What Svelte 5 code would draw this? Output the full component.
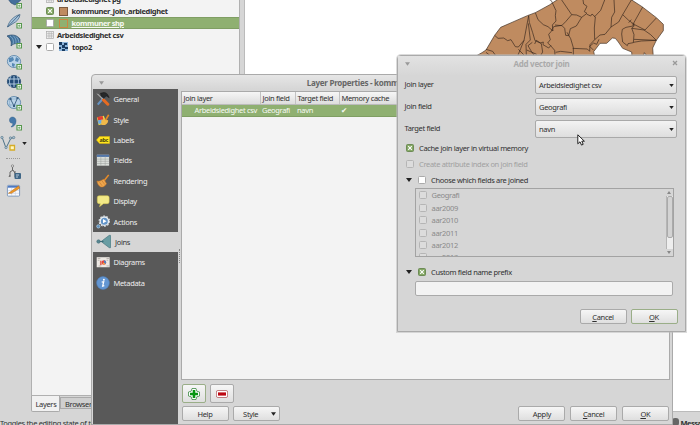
<script>
  const tabs = ['General', 'Style', 'Labels', 'Fields', 'Rendering', 'Display', 'Actions', 'Joins', 'Diagrams', 'Metadata'];
  const combos = [
    ['Join layer', 'Arbeidsledighet csv'],
    ['Join field', 'Geografi'],
    ['Target field', 'navn']
  ];
  const fields = ['Geografi', 'aar2009', 'aar2010', 'aar2011', 'aar2012', 'aar2013'];
  const tools = ['shape', 'feather', 'fan', 'globe', 'grid', 'wfs', 'comma', 'vector', 'sep', 'gps', 'edit'];
</script>

{#snippet check(on, dim)}
  <span class="check" class:on class:dim>
    {#if on}<svg viewBox="0 0 6 6"><path d="M1.200 1.200l3.600 3.600M4.800 1.200l-3.600 3.600" stroke="#fff" stroke-width="1.100" /></svg>{/if}
  </span>
{/snippet}

{#snippet down(cls)}
  <svg class="down {cls}" viewBox="0 0 6 4"><path d="M0 0h6L3 4z" fill="currentColor" /></svg>
{/snippet}

{#snippet plus(color)}
  <path d="M11 10.500h4.500V15H11z" fill="#fff" stroke={color} stroke-width="1.200" /><path d="M13.250 11.500v2.500M12 12.750h2.500" stroke={color} stroke-width=".7" />
{/snippet}

{#snippet table()}
  <svg class="tbl" viewBox="0 0 8 8"><rect x=".5" y=".5" width="7" height="7" fill="#eee" stroke="#aaa" stroke-width=".7" /><path d="M1 2.7h6M1 5h6M3 1v6M5.3 1v6" stroke="#aaa" stroke-width=".6" /></svg>
{/snippet}

<div class="screen">
  <div class="toolbar">
    {#each tools as t}
      <div class="tool {t}">
        {#if t === 'sep'}
          <i></i>
        {:else}
          <svg viewBox="0 0 16 16">
            {#if t === 'shape'}
              <path d="M2 6l5-5 4 4 3-3 1 5-6 5-4-2z" fill="#456f9b" stroke="#28496d" stroke-width=".6" />{@render plus('#57984e')}
            {:else if t === 'feather'}
              <path d="M1.5 14C3 8 8 3 14 1.5c-.5 4-3 7-7 9z" fill="#a9c5dc" stroke="#476a88" stroke-width=".8" /><path d="M1.5 14L13 2" stroke="#355879" stroke-width=".8" />{@render plus('#57984e')}
            {:else if t === 'fan'}
              <path d="M1 3c5-2 10-1 13 3v6c-3-2-6-2-9 1 1-5-1-8-4-10z" fill="#42729c" stroke="#294a6c" stroke-width=".7" /><path d="M4 3c3 2 4 5 3 8M7 2.500c3 3 3 5 3 8M10 3.500c2 2 3 4 3 7" fill="none" stroke="#a9cbe3" stroke-width=".6" />{@render plus('#57984e')}
            {:else if t === 'globe' || t === 'wfs'}
              <ellipse cx="8" cy="7.500" rx="6.600" ry="6" fill="#bad3e8" stroke="#517da4" stroke-width=".8" />
              {#if t === 'globe'}
                <path d="M3 4l4-1 1 3-3 2-2 0zM10 3l3 2-1 3-3-1zM6 9l3 1-1 3-2-1z" fill="#5588b4" />
              {:else}
                <path d="M2 4h12M2 10h12M5 2c-2 4-2 7 0 11" stroke="#7098bb" stroke-width=".5" fill="none" /><path d="M4.500 4l3.500 7 3.500-8" fill="none" stroke="#385d80" stroke-width=".9" /><path d="M3.500 3h2v2h-2zM7 10h2v2H7zM10.500 2h2v2h-2z" fill="#385d80" />
              {/if}
              {@render plus('#57984e')}
            {:else if t === 'grid'}
              <ellipse cx="8" cy="7.500" rx="6.600" ry="6" fill="#224b77" stroke="#1d4269" stroke-width=".8" /><path d="M2 5h12M2 10h12M8 2v11M5 2c-2 4-2 7 0 11M11 2c2 4 2 7 0 11" stroke="#bed6e9" stroke-width=".9" fill="none" />{@render plus('#57984e')}
            {:else if t === 'comma'}
              <path d="M3.500 5c0-4 6.500-4 6.500 1 0 4-3 6-5 6 2-2 2-3 1.500-4C4.500 8.500 3.500 7 3.500 5z" fill="#4679aa" stroke="#315f8b" stroke-width=".5" />{@render plus('#57984e')}
            {:else if t === 'vector'}
              <path d="M2 2l4 11L11 3h3" fill="none" stroke="#4b7187" stroke-width="1" /><g fill="#a8c0d0" stroke="#557486" stroke-width=".6"><circle cx="2" cy="2.500" r="1.200" /><circle cx="6" cy="12.500" r="1.200" /><circle cx="10.500" cy="3" r="1.200" /><circle cx="13.700" cy="2.500" r="1.200" /></g><path d="M10 10.500h4.500V15H10z" fill="#fff7bf" stroke="#d6ac26" stroke-width="1.300" />
            {:else if t === 'gps'}
              <path d="M4 13V8l3-2 3 5M6.500 6V2.500M4 11l-1 2M9 7v6" fill="none" stroke="#666" stroke-width="1" /><circle cx="6.500" cy="2" r="1.200" fill="#ddd" stroke="#666" stroke-width=".6" /><rect x="8.500" y="9" width="6.500" height="6" rx="1" fill="#3f6686" /><path d="M10 11h3M10 13h2" stroke="#dce9f3" stroke-width=".8" />
            {:else}
              <rect x="1.500" y="2.500" width="13" height="11.500" rx="1" fill="#f7f9fd" stroke="#6e8cb4" stroke-width=".9" /><path d="M2 3h12v2H2z" fill="#4c79c3" /><path d="M2 8h12M2 11h12M6 5v9M10 5v9" stroke="#b8c6dc" stroke-width=".5" /><path d="M2.500 11L13.500 3l1 2.500L6 11z" fill="#ed9828" stroke="#b66917" stroke-width=".5" />
            {/if}
          </svg>
          {#if t === 'vector'}{@render down('dark')}{/if}
        {/if}
      </div>
    {/each}
  </div>

  <div class="dock">
    <div class="tree">
      <div class="node l1">{@render table()}<b>arbeidsledighet pg</b></div>
      <div class="node l1">{@render check(true, false)}<i class="swatch fill"></i><b>kommuner_join_arbledighet</b></div>
      <div class="node l1 selected">{@render check(false, false)}<i class="swatch"></i><b><u>kommuner shp</u></b></div>
      <div class="node l1 short">{@render table()}<b>Arbeidsledighet csv</b></div>
      <div class="node l0">{@render down('dark')}{@render check(false, false)}
        <svg class="raster" viewBox="0 0 9 9"><rect width="9" height="9" fill="#8cb4da" /><path d="M0 0h3v3H0zM5 1h3v2H5zM3 3h3v3H3zM0 5h2v2H0zM6 5h3v2H6zM3 7h3v2H3z" fill="#193a60" /></svg>
        <b>topo2</b></div>
    </div>
    <div class="docktabs"><span class="active">Layers</span><span>Browser</span></div>
  </div>

  <div class="canvas">
    <svg class="map" viewBox="0 0 750 168">
      <path d="M78 168L96 158 108 150 134 106 152 82 232 47 256 38 298 15 330 -6H536L576 20 619 53 640 73V92L619 121 608 144 610 172H594L583 158 580 172H546L545 156 518 145 505 126 496 115 487 114 470 130H450L431 155 435 172H78z" fill="#bf8b60" stroke="#3d2c20" stroke-width="2" />
      <g fill="none" stroke="#30221a" stroke-width="1.900" stroke-linejoin="round">
        <path d="M134 106l10 9 17-1 12 8 10-3 13 21 9 1 17-20 14-74 2 20 10 31 7 24 16 7 9-3-1 8 17 10 7-8" />
        <path d="M222 121l-10 25-8 19M235 70l6 50-13 13 1 35M256 38l8 21 16 15 14 6 15 13-2-18 11-12-2-16 2-15-14-30-7-4" />
        <path d="M315 75l20 2 12-12 18-21-30-44M365 44l15 1 15 7-16 26-18 8-5 21-9-1-3-21-9-9-24 4-8 15-7 8 5 16-8 10 8 7 13 15 1 16M395 52l16-12-8-5 8-16-10-7-2-12M411 43l11 5 4-6 10 9-3 33 1 35-14 15-1 20-7-7-44-2" />
        <path d="M433 51l19-20 12-31M434 119l16-14 15-2 18-22 2-29 9-16-2-36M483 81l23-15 12-22 26-44M518 44l18 17 14 10 28-50M536 68l8-9M431 151l-12-12 12-10 9 4 7-15M351 97l11 19 8 27v25M317 157l15-3 34 4" />
        <path d="M546 70l7 8-8 6 7 20-2 24-16 3-2 6-14-11-3-24 2-14 11-6 21-4 3-9M546 85l36 5 20 14 17 17M552 118l67 3M585 90l34-36M619 121l-45 2-24 4M550 72l35 18M108 148l20 6 10 14M108 157l14 11M247 127l-13 10 10 17 10 14M254 132l5-11 15 10 4 25-7 12M205 148l20 20M230 150l30 13" />
      </g>
    </svg>
  </div>

  <div class="status"><span>Toggles the editing state of the current layer</span><span class="msg"><i></i><b>Messages</b></span></div>

  <section class="props">
    <header><i class="menu">{@render down('gray')}</i><b>Layer Properties - kommuner shp | Joins</b></header>
    <div class="body">
      <nav>
        {#each tabs as t}
          <div class="tab" class:current={t === 'Joins'}>
            <svg viewBox="0 0 16 16">
              {#if t === 'General'}
                <path d="M2 14.500L11 4" stroke="#6594c4" stroke-width="2.400" /><path d="M1.500 2l7 7" stroke="#ddd" stroke-width="1" /><path d="M8.500 9l5 5" stroke="#e66b22" stroke-width="3.400" stroke-linecap="round" /><path d="M5 1.500l4-1c3 0 5 2.500 6 6l-3-2-3 3-3-3z" fill="#262829" stroke="#111" stroke-width=".5" />
              {:else if t === 'Style'}
                <path d="M1 5l8-2 3 8-9 3z" fill="#e9d94b" /><path d="M1.500 4.500l6-1 1 4-6 1z" fill="#e43d32" /><path d="M2 8.500l5-1 1 4-5 1z" fill="#69a9e8" /><path d="M6 8.500l4-2 4 2c-1 5-4 6-8 5z" fill="#f0b94a" /><path d="M11 8l3.500-6" stroke="#e68a24" stroke-width="1.800" />
              {:else if t === 'Labels'}
                <path d="M.5 8L4 4h11.500v8H4z" fill="#ffe51c" stroke="#e6b80b" stroke-width=".5" /><text x="4" y="10.300" font-size="6.200" font-weight="700" fill="#443c10">abc</text>
              {:else if t === 'Fields'}
                <rect x="1" y="2" width="14" height="12.500" fill="#dadeda" /><path d="M1 2h14v2.500H1z" fill="#5377aa" /><path d="M1 7h14M1 9.500h14M1 12h14M5.500 4v10.500M10.500 4v10.500" stroke="#9ba09d" stroke-width=".6" />
              {:else if t === 'Rendering'}
                <path d="M9 8l5.500-7" stroke="#e78b28" stroke-width="1.800" /><path d="M1 8c3 1 5.500-1 8-2l3 5c-2 3.500-5 4.500-7 3.500-2-1-3.500-3.500-4-6.500z" fill="#eca64e" stroke="#ce7420" stroke-width=".6" /><path d="M4 9.500l3 4M7 8l3 4" stroke="#bd6e22" stroke-width=".6" />
              {:else if t === 'Display'}
                <path d="M3.500 2h9.500q2 0 2 2v5q0 2-2 2H8.500l-4.500 3.500 1-3.500H3.500q-2 0-2-2V4q0-2 2-2z" fill="#f2e987" stroke="#d9c94f" stroke-width=".6" />
              {:else if t === 'Actions'}
                <circle cx="9.500" cy="7" r="4.800" fill="#6294c8" stroke="#e7edf2" stroke-width="1.600" /><circle cx="9.500" cy="7" r="5.900" fill="none" stroke="#e7edf2" stroke-width="1.300" stroke-dasharray="1.850 1.850" /><path d="M8 4.700l4 2.300-4 2.300z" fill="#fff" /><circle cx="2.700" cy="13" r="1.900" fill="#5b8ebb" stroke="#b8d5eb" stroke-width=".8" />
              {:else if t === 'Joins'}
                <path d="M5.500 8L14 1.500q1.600-.8 1.800 1v11q-.2 1.800-1.800 1z" fill="#699da3" stroke="#3e7078" stroke-width=".7" /><circle cx="2.700" cy="8" r="1.900" fill="#598691" stroke="#396873" stroke-width=".5" /><path d="M4 8h4" stroke="#396873" />
              {:else if t === 'Diagrams'}
                <rect x=".8" y="2.500" width="14.800" height="11.500" fill="#ede9e4" /><path d="M2 4h3M2 6h2M12 4h3M12 6h2M3 12.500h3M12 12.500h3" stroke="#a8a29d" stroke-width=".8" /><circle cx="9" cy="8.500" r="2.600" fill="#e8433d" /><path d="M9 8.500V5.900a2.600 2.600 0 0 1 2 4.300z" fill="#4f83c4" /><path d="M4.500 6.500h2v5h-2z" fill="#df6b5e" /><path d="M9 8.500l1.600 2.200-3.400 0z" fill="#eebc44" />
              {:else}
                <circle cx="8" cy="8" r="7.300" fill="#6396d2" stroke="#4b7fbd" stroke-width=".6" /><circle cx="9" cy="4.300" r="1.100" fill="#fff" /><path d="M6.500 7l2.300-.5-1.200 5 1.900-.5" fill="none" stroke="#fff" stroke-width="1.400" />
              {/if}
            </svg>
            <span>{t}</span>
          </div>
        {/each}
      </nav>
      <div class="grip"><i></i></div>
      <main>
        <div class="joins">
          <div class="row head"><span>Join layer</span><span>Join field</span><span>Target field</span><span>Memory cache</span></div>
          <div class="row sel"><span>Arbeidsledighet csv</span><span>Geografi</span><span>navn</span><span class="tick">✔</span></div>
        </div>
        <div class="edit">
          <div class="btn green"><svg viewBox="0 0 12 12"><path d="M4 .5h4l.8 2.700 2.700.8v4l-2.700.8L8 11.500H4l-.8-2.700L.5 8V4l2.700-.8z" fill="#fff" stroke="#257c2d" stroke-width=".7" /><path d="M6 2v8M2 6h8" stroke="#079611" stroke-width="2.600" /></svg></div>
          <div class="btn"><svg viewBox="0 0 12 12"><rect x=".4" y="2.500" width="11.200" height="7" rx="1.500" fill="#fff" stroke="#a94a50" stroke-width=".7" /><path d="M2 6h8" stroke="#be0712" stroke-width="3.200" /></svg></div>
        </div>
        <div class="actions">
          <div class="btn">Help</div>
          <div class="btn style"><span>Style</span>{@render down('dark')}</div>
          <div class="spring"></div>
          <div class="btn">Apply</div><div class="btn"><span><u>C</u>ancel</span></div><div class="btn"><span><u>O</u>K</span></div>
        </div>
      </main>
    </div>
  </section>

  <section class="join">
    <header><i class="menu">{@render down('gray')}</i><b>Add vector join</b><svg class="close" viewBox="0 0 6 6"><path d="M1 1l4 4M5 1L1 5" stroke="#999" stroke-width="1.300" /></svg></header>
    <div class="combos">
      {#each combos as [label, value]}
        <div class="line"><span>{label}</span><div class="combo"><span>{value}</span>{@render down('dark')}</div></div>
      {/each}
    </div>
    <div class="opt">{@render check(true, false)}<span>Cache join layer in virtual memory</span></div>
    <div class="opt faded">{@render check(false, true)}<span>Create attribute index on join field</span></div>
    <div class="opt group">{@render down('dark')}{@render check(false, false)}<span>Choose which fields are joined</span></div>
    <div class="list">
      <div class="items">
        {#each fields as f}<div>{@render check(false, true)}<span>{f}</span></div>{/each}
      </div>
      <div class="scroll">
        <svg viewBox="0 0 4 3"><path d="M0 3h4L2 0z" fill="#888" /></svg>
        <div class="track"><i></i></div>
        <svg viewBox="0 0 4 3"><path d="M0 0h4L2 3z" fill="#888" /></svg>
      </div>
    </div>
    <div class="opt group prefix">{@render down('dark')}{@render check(true, false)}<span>Custom field name prefix</span></div>
    <div class="input"></div>
    <footer><div class="btn"><span><u>C</u>ancel</span></div><div class="btn green"><span><u>O</u>K</span></div></footer>
  </section>

  <svg class="cursor" viewBox="0 0 8 12"><path d="M.8.8v9L3 7.800l1.500 3.300 1.700-.8L4.800 7.200h2.600z" fill="#fff" stroke="#222" stroke-width="1" /></svg>
</div>

<style>
  :global(body) { margin: 0; overflow: hidden; }
  * { box-sizing: border-box; }
  svg { display: block; flex: none; }
  i { display: block; flex: none; }
  .screen {
    position: relative; width: 700px; height: 425px; overflow: hidden; background: #d6d6d6; color: #303030;
    font: 7.5px/10px "Noto Sans", sans-serif; letter-spacing: -.33px; white-space: nowrap;
    display: grid; grid-template-columns: 31px 213px 1fr; grid-template-rows: 412px 13px;
  }
  .toolbar { display: flex; flex-direction: column; margin-top: -9.5px; background: #d6d6d6; overflow: hidden; }
  .tool { height: 20.4px; flex: none; display: flex; align-items: center; padding-left: 6px; }
  .tool svg:first-child { width: 16px; height: 16px; }
  .tool.vector { padding-left: 0; gap: 6px; }
  .tool.sep { height: 9px; }
  .tool.sep i { width: 14px; border-top: 1px dotted #999; }
  .tool.gps { height: 19px; }
  .tool.edit { height: 18px; margin: 0; }
  .tool.edit svg { width: 15px; height: 15px; }
  .tool .down { width: 5px; height: 3px; }
  .down { width: 6px; height: 4px; }
  .dark { color: #222; }
  .gray { color: #999; }
  .dock { display: flex; flex-direction: column; }
  .tree { height: 396px; width: 209px; background: #f3f3f3; border: 1px solid #b0b0b0; border-top: 0; overflow: hidden; }
  .node { height: 12px; display: flex; align-items: center; }
  .node:first-child { margin-top: -7px; }
  .node.l1 { padding-left: 14px; }
  .node.l0 { padding-left: 4px; }
  .node.l0 .down { margin-right: 4px; }
  .node b { font-size: 7.5px; letter-spacing: -.37px; }
  .node .tbl { width: 8px; height: 8px; margin-right: 3px; }
  .node.short { height: 11.5px; }
  .selected { background: #8fb071; color: #f5f8f2; border-top: 1px solid #7f9e63; border-bottom: 1px solid #7f9e63; }
  .swatch { width: 9px; height: 9px; border: 1px solid #c98742; margin: 0 3.500px 0 5px; }
  .swatch.fill { background: #bf8b60; border-color: #7c5a40; }
  .raster { width: 9px; height: 9px; margin: 0 4px 0 5px; }
  .check { width: 8px; height: 8px; flex: none; background: #fff; border: 1px solid #aaa; border-radius: 1.5px; }
  .check.on { background: #84a864; border-color: #6d8b56; }
  .check svg { width: 6px; height: 6px; }
  .check.dim { background: #dcdcdc; border-color: #b5b5b5; }
  .docktabs { display: flex; align-items: flex-start; }
  .docktabs span { width: 34px; height: 12px; border: 1px solid #aaa; background: #cfcfcf; padding-left: 4px; margin-top: 1px; line-height: 12px; }
  .docktabs .active { width: 29px; height: 16px; margin-top: 0; background: #f1f1f1; border-top: 0; border-radius: 0 0 2px 2px; line-height: 17px; padding-left: 3.5px; }
  .canvas { background: #fff; border-bottom: 1px solid #bbb; border-left: 1px solid #bbb; }
  .map { width: 250px; height: 56px; margin-left: 205px; }
  .status { grid-column: 1 / 4; display: flex; justify-content: space-between; padding-top: 5.5px; }
  .status .msg { display: flex; width: 28px; gap: 1.500px; letter-spacing: -.55px; }
  .msg i { width: 7px; height: 8px; border-radius: 3px; background: #666; }

  section { position: absolute; background: #d6d6d6; }
  header { display: flex; position: relative; justify-content: center; color: #666; }
  header b { font-size: 8px; letter-spacing: -.3px; }
  .props { left: 91px; top: 74px; width: 582px; height: 351px; border: 1px solid #aaa; border-radius: 4px 4px 0 0; background: linear-gradient(#e6e6e6, #d6d6d6 14px); }
  .props header { height: 14px; padding-top: 3px; }
  .props header b { letter-spacing: -.27px; }
  .menu { position: absolute; left: 6.500px; top: 5.500px; }
  .menu .down { width: 5px; height: 4px; }
  .body { display: flex; height: 335px; }
  nav { width: 85px; margin-left: 1px; background: #595959; color: #eee; }
  .tab { height: 20.4px; display: flex; align-items: center; padding-left: 3px; gap: 3.5px; }
  .tab svg { width: 14px; height: 14px; }
  .tab.current { background: #d6d6d6; color: #333; gap: 4px; }
  .tab.current svg { width: 15px; height: 15px; }
  .grip { width: 3px; padding-top: 160px; }
  .grip i { height: 14px; width: 1px; margin-left: 1px; border-left: 1px dotted #888; }
  main { display: flex; flex-direction: column; width: 489px; }
  .joins { height: 289px; margin-top: 2px; border: 1px solid #aaa; background: #f3f3f3; }
  .row { display: grid; grid-template-columns: 78px 35px 44px 1fr; height: 13px; line-height: 12px; }
  .row span { padding-left: 1.500px; border-left: 1px solid #c2c2c2; }
  .row span:first-child { border: 0; padding-left: 1.5px; }
  .row.head { background: linear-gradient(#f6f6f6, #ddd); border-bottom: 1px solid #bbb; }
  .row.sel { background: #8fb071; color: #f8faf5; height: 11.5px; line-height: 11px; border-bottom: 1px solid #7f9e63; }
  .row.sel span { border-color: transparent; padding-left: 1px; }
  .row.sel span:first-child { padding-left: 12.500px; }
  .row .tick { font-family: "DejaVu Sans", sans-serif; }
  .btn { width: 47px; height: 15px; flex: none; border: 1px solid #aaa; border-radius: 2px; background: linear-gradient(#f6f6f6, #dfdfdf); display: flex; align-items: center; justify-content: center; }
  .btn.green { border-color: #9aae88; }
  .edit { display: flex; }
  main .edit { gap: 4px; margin: 4px 0 4px 1px; }
  main .edit .btn { width: 24px; height: 19px; }
  main .edit svg { width: 12px; height: 12px; }
  .actions { display: flex; gap: 4.7px; padding: 0 1.2px 0 .5px; margin-top: -.6px; }
  .spring { flex: 1; }
  .style { padding-left: 6px; }
  .style span { margin-right: 13px; }
  .style .down { width: 5px; }

  .join { left: 397px; top: 55px; width: 289px; height: 277px; border: 1px solid #aaa; border-radius: 4px 4px 0 0; box-shadow: 0 0 0 1px #bbb8; }
  .join header { height: 20px; padding-top: 3px; color: #aaa; background: linear-gradient(#e2e2e2, #d6d6d6); }
  .close { width: 6px; height: 6px; position: absolute; right: 7px; top: 4px; }
  .combos { display: flex; flex-direction: column; gap: 4px; padding: 0 8px 0 6.5px; }
  .line { height: 18px; display: flex; justify-content: space-between; align-items: center; }
  .line > span { margin-top: -2px; }
  .combo { width: 142px; height: 18px; border: 1px solid #a9a9a9; border-radius: 2px; background: linear-gradient(#f3f3f3, #dedede); display: flex; align-items: center; justify-content: space-between; padding: 0 2.5px 0 3px; }
  .combo .down { width: 5px; height: 3px; }
  .opt { height: 16px; display: flex; align-items: center; padding-left: 8px; gap: 5px; }
  .combos + .opt { margin-top: 2px; }
  .faded { color: #a0a0a0; }
  .group .down { margin-right: 1px; }
  .list { margin-left: 16.500px; width: 259px; height: 69px; border: 1px solid #a3a3a3; display: flex; justify-content: space-between; overflow: hidden; color: #8a8a8a; }
  .items div { height: 12.5px; display: flex; align-items: center; gap: 5px; padding-left: 3px; }
  .items div:last-child { margin-top: -1px; }
  .scroll { width: 7px; display: flex; flex-direction: column; align-items: center; padding: 2px 0; gap: 2px; }
  .scroll svg { width: 4px; height: 3px; }
  .track { flex: 1; width: 7px; background: #eee; border-left: 1px solid #b5b5b5; }
  .track i { height: 42px; width: 6px; border: 1px solid #aaa; border-radius: 2px; background: #d3d3d3; }
  .prefix { margin-top: 7px; }
  .input { margin: 1px 0 0 17px; width: 257.500px; height: 15px; border: 1px solid #aaa; border-radius: 2px; background: #f3f3f3; }
  footer { display: flex; justify-content: flex-end; gap: 4px; padding: 13px 7.500px 0 0; }
  .cursor { position: absolute; left: 577px; top: 134px; width: 8px; height: 12px; }
</style>
